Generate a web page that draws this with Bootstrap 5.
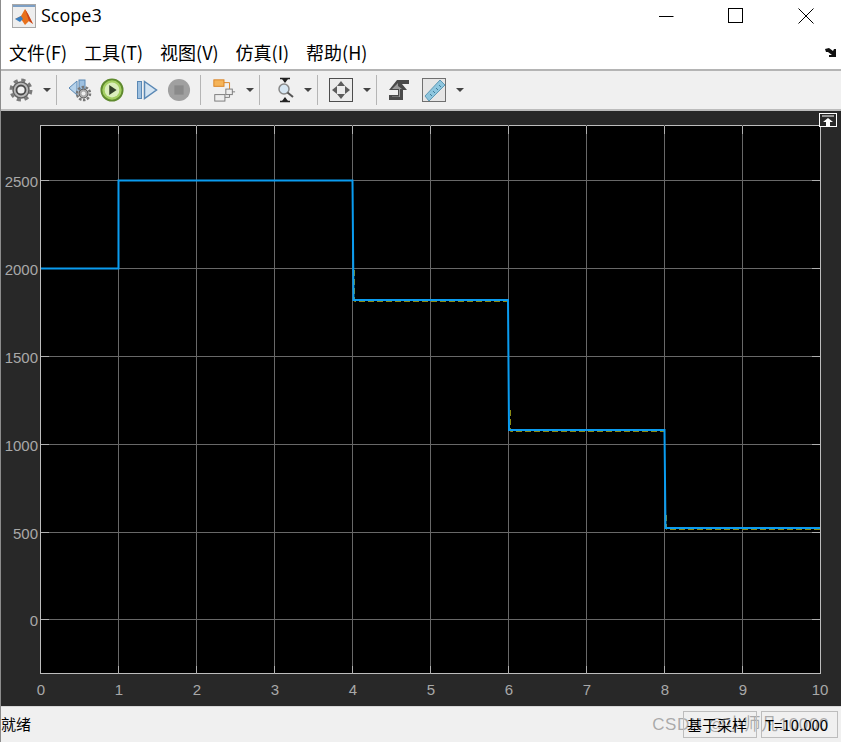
<!DOCTYPE html>
<html lang="zh">
<head>
    <meta charset="UTF-8">
    <meta name="viewport" content="width=device-width, initial-scale=1.0">
    <title>Scope3</title>
    <link href="https://cdn.jsdelivr.net/npm/bootstrap@5.3.0/dist/css/bootstrap.min.css" rel="stylesheet">
    <style>
        html, body { height: 100%; }
        body { background: #fff; overflow: hidden; font-family: "Noto Sans CJK SC", "Noto Sans", sans-serif; color: #000; }
        .scope-win { height: 742px; border-left: 1px solid #8c8c8c; }
        .scope-title { height: 36px; padding: 0 0 5px 11px; }
        .scope-title-text { font-family: "Open Sans", sans-serif; font-size: 18px; margin-left: 5px; }
        .win-btn { width: 46px; height: 32px; }
        .win-btns { margin-right: 12px; }
        .win-btn-gap { margin-left: 24px; }
        .scope-menu { height: 35px; padding-left: 8px; border-bottom: 2px solid #b4b4b4; font-size: 18px; gap: 17px; }
        .scope-tools { height: 40px; background: #f0f0f0; border-bottom: 2px solid #bcbcbc; padding-left: 8px; }
        .tool-sep { width: 1px; height: 30px; background: #b5b5b5; margin: 0 11px 0 5px; }
        .tool-caret { width: 0; height: 0; border-left: 4px solid transparent; border-right: 4px solid transparent; border-top: 4px solid #444; margin-left: 10px; }
        .tool-stop { margin: 0 4px 0 8px; }
        .tool-step { margin-left: 11px; }
        .tool-zoom { margin: 0 -3px 0 2px; }
        .tool-ruler { margin-left: 12px; }
        .scope-plot { height: 595px; background: #282828; }
        .scope-plot svg { display: block; }
        .tick-text { font-family: "Liberation Sans", sans-serif; font-size: 15px; fill: #a8a8a8; }
        .scope-status { height: 36px; background: #f0f0f0; border-top: 1px solid #d8d8d8; font-size: 15px; }
        .status-boxes { margin-right: 3px; }
        .status-box { height: 27px; border: 1px solid #bdbdbd; line-height: 25px; padding: 0 3px; }
        .status-one { width: 74px; }
        .status-two { width: 77px; }
        .status-wm { right: 12px; top: 5px; font-family: "Liberation Sans", "Noto Sans CJK SC", sans-serif; font-size: 17px; letter-spacing: .6px; color: rgba(110,110,110,.55); }
    </style>
</head>
<body>

<div class="scope-win d-flex flex-column">
    <div class="scope-title d-flex align-items-center">
        <svg width="24" height="24" viewBox="0 0 24 24">
            <rect x=".5" y=".5" width="23" height="23" fill="#eeeeee" stroke="#a8a8a8"/>
            <rect x="1" y="1" width="22" height="2" fill="#7d9fc4"/>
            <polygon points="3,15 9,12 13,5 16,10 21,20 17,17 13,21 9,15" fill="#e8711c"/>
            <polygon points="3,15 9,12 11,15 8,18" fill="#3a7fc0"/>
            <polygon points="13,5 16,10 21,20 17,17 15,11" fill="#c8421a"/>
        </svg>
        <span class="scope-title-text">Scope3</span>
        <div class="ms-auto d-flex win-btns">
            <div class="win-btn d-flex align-items-center justify-content-center">
                <svg width="16" height="16"><path d="M1 8.5H15.5" stroke="#000"/></svg>
            </div>
            <div class="win-btn win-btn-gap d-flex align-items-center justify-content-center">
                <svg width="16" height="16"><rect x=".5" y=".5" width="14" height="14" fill="none" stroke="#000"/></svg>
            </div>
            <div class="win-btn win-btn-gap d-flex align-items-center justify-content-center">
                <svg width="16" height="16"><path d="M.5 .5L15.5 15.5M15.5 .5L.5 15.5" stroke="#000"/></svg>
            </div>
        </div>
    </div>

    <div class="scope-menu d-flex align-items-center">
        <span>文件(F)</span>
        <span>工具(T)</span>
        <span>视图(V)</span>
        <span>仿真(I)</span>
        <span>帮助(H)</span>
        <svg class="ms-auto me-1" width="13" height="11" viewBox="0 0 13 11"><path d="M1 2L5 1L9 4L10 2H12V10H5V8H8L4 5L2 5Z" fill="#111"/></svg>
    </div>

    <div class="scope-tools d-flex align-items-center">
        <!-- gear -->
        <svg width="24" height="24" viewBox="0 0 24 24">
            <circle cx="12" cy="12" r="10" fill="none" stroke="#7a7a7a" stroke-width="3" stroke-dasharray="4.2 3.65"/>
            <circle cx="12" cy="12" r="8" fill="#b8b8b8" stroke="#606060" stroke-width="1.5"/>
            <circle cx="12" cy="12" r="4.5" fill="#f0f0f0" stroke="#4c4c4c" stroke-width="1.8"/>
        </svg>
        <span class="tool-caret"></span>
        <span class="tool-sep"></span>
        <!-- step back -->
        <svg width="24" height="24" viewBox="0 0 24 24">
            <polygon points="1,10 9,3 9,17" fill="#b6d2ea" stroke="#5a88b4"/>
            <rect x="11" y="2" width="6" height="11" fill="#9dc0e0" stroke="#5a88b4"/>
            <circle cx="15.5" cy="15.5" r="6.5" fill="none" stroke="#777" stroke-width="2.5" stroke-dasharray="2.5 1.5"/>
            <circle cx="15.5" cy="15.5" r="4.5" fill="#aaa" stroke="#555"/>
            <circle cx="15.5" cy="15.5" r="2" fill="#eee"/>
        </svg>
        <!-- run -->
        <svg class="ms-2" width="24" height="24" viewBox="0 0 26 26">
            <circle cx="13" cy="13" r="11.5" fill="#a4cf62" stroke="#5f8a2e" stroke-width="2"/>
            <circle cx="13" cy="13" r="8" fill="#dbeebc"/>
            <polygon points="10,7.5 18,13 10,18.5" fill="#33402a"/>
        </svg>
        <!-- step forward -->
        <svg class="tool-step" width="24" height="24" viewBox="0 0 24 24">
            <rect x="2.5" y="3.5" width="4" height="17" fill="#9dc0e0" stroke="#5a88b4"/>
            <polygon points="9.5,3.5 21.5,12 9.5,20.5" fill="#d4e4f2" stroke="#5a88b4" stroke-width="1.5"/>
        </svg>
        <!-- stop -->
        <svg class="tool-stop" width="24" height="24" viewBox="0 0 26 26">
            <circle cx="13" cy="13" r="12" fill="#a0a0a0"/>
            <rect x="8" y="8" width="10" height="10" fill="#8a8a8a"/>
        </svg>
        <span class="tool-sep"></span>
        <!-- blocks -->
        <svg width="24" height="24" viewBox="0 0 26 26">
            <rect x="2" y="2" width="11" height="7" fill="#f5b45a" stroke="#d9801f"/>
            <path d="M13 5H19V12" fill="none" stroke="#d9801f"/>
            <rect x="15" y="12" width="7" height="6" fill="#eee" stroke="#777"/>
            <rect x="3" y="18" width="11" height="7" fill="#eee" stroke="#777"/>
            <path d="M14 21H19V18M22 15H25" fill="none" stroke="#777"/>
        </svg>
        <span class="tool-caret"></span>
        <span class="tool-sep"></span>
        <!-- zoom -->
        <svg class="tool-zoom" width="24" height="26" viewBox="0 0 24 26">
            <path d="M7 1.5H17M7 24.5H17M12 1.5V5M12 21V24.5" stroke="#222" stroke-width="1.5"/>
            <path d="M9 2L15 2L12 6ZM9 24L15 24L12 20Z" fill="#222"/>
            <circle cx="11" cy="12" r="5" fill="#d6e6f2" stroke="#888" stroke-width="1.5"/>
            <path d="M14.5 15.5L20 20" stroke="#555" stroke-width="2"/>
        </svg>
        <span class="tool-caret"></span>
        <span class="tool-sep"></span>
        <!-- autoscale -->
        <svg width="24" height="24" viewBox="0 0 24 24">
            <rect x=".5" y=".5" width="23" height="23" fill="#ececec" stroke="#4d4d4d"/>
            <path d="M12 3L16 8H8ZM12 21L16 16H8ZM3 12L8 8V16ZM21 12L16 8V16Z" fill="#5c5c5c"/>
        </svg>
        <span class="tool-caret"></span>
        <span class="tool-sep"></span>
        <!-- signal step -->
        <svg width="22" height="24" viewBox="0 0 22 24">
            <path d="M9 2H21V6H14L19 12H15V22H1V17H10V12H1Z" fill="#4a4a4a"/>
            <path d="M4 11L10 5V8L14 11H12V19H4V18.5H11V11Z" fill="#9a9a9a"/>
        </svg>
        <!-- ruler -->
        <svg class="tool-ruler" width="24" height="24" viewBox="0 0 24 24">
            <rect x=".5" y=".5" width="23" height="23" fill="#e6e6e6" stroke="#707070"/>
            <polygon points="3,18 18,2 23,7 7,23" fill="#8ec6de" stroke="#5f99b5"/>
            <path d="M8 16l2 2M11 13l2 2M14 10l2 2M17 7l2 2" stroke="#3f7d9b"/>
        </svg>
        <span class="tool-caret"></span>
    </div>

    <div class="scope-plot flex-shrink-0">
        <!-- x: 78 px per unit, y: 87.8 px per 500 -->
        <svg width="840" height="595" viewBox="1 111 840 595">
            <rect x="40.5" y="125.5" width="780" height="548" fill="#000" stroke="#bdbdbd"/>
            <g stroke="#686868">
                <path d="M118.5 125V674M196.5 125V674M274.5 125V674M352.5 125V674M430.5 125V674M508.5 125V674M586.5 125V674M664.5 125V674M742.5 125V674"/>
                <path d="M41 180.5H820M41 268.5H820M41 356.5H820M41 444.5H820M41 532.5H820M41 619.5H820"/>
            </g>
            <!-- short ticks, brighter than the grid -->
            <g stroke="#b0b0b0">
                <path d="M41 180.5h8M41 268.5h8M41 356.5h8M41 444.5h8M41 532.5h8M41 619.5h8M812 180.5h8M812 268.5h8M812 356.5h8M812 444.5h8M812 532.5h8M812 619.5h8"/>
                <path d="M118.5 666v8M196.5 666v8M274.5 666v8M352.5 666v8M430.5 666v8M508.5 666v8M586.5 666v8M664.5 666v8M742.5 666v8M118.5 126v8M196.5 126v8M274.5 126v8M352.5 126v8M430.5 126v8M508.5 126v8M586.5 126v8M664.5 126v8M742.5 126v8"/>
            </g>
            <polyline points="354.5,270 354.5,301.5 508,301.5" fill="none" stroke="#8a8a12" stroke-dasharray="6 3"/>
            <polyline points="510.5,410 510.5,431.5 664,431.5" fill="none" stroke="#8a8a12" stroke-dasharray="6 3"/>
            <polyline points="666.5,515 666.5,529.5 820,529.5" fill="none" stroke="#8a8a12" stroke-dasharray="6 3"/>
            <polyline points="41,268.5 118.5,268.5 118.5,180.5 352.5,180.5 353.5,300 508,300 509,430 664.5,430 665.5,528 820,528" fill="none" stroke="#0a9cf0" stroke-width="2"/>
            <g class="tick-text" text-anchor="middle">
                <text x="41" y="695">0</text><text x="119" y="695">1</text><text x="197" y="695">2</text>
                <text x="275" y="695">3</text><text x="353" y="695">4</text><text x="431" y="695">5</text>
                <text x="509" y="695">6</text><text x="587" y="695">7</text><text x="665" y="695">8</text>
                <text x="743" y="695">9</text><text x="820" y="695">10</text>
            </g>
            <g class="tick-text" text-anchor="end">
                <text x="38" y="187">2500</text><text x="38" y="275">2000</text><text x="38" y="363">1500</text>
                <text x="38" y="451">1000</text><text x="38" y="539">500</text><text x="38" y="626">0</text>
            </g>
            <rect x="819.5" y="113.5" width="17" height="13" fill="#282828" stroke="#fff"/>
            <path d="M822 116H834" stroke="#fff"/>
            <path d="M828 118L833 122H830V126H826V122H823Z" fill="#fff"/>
        </svg>
    </div>

    <div class="scope-status d-flex align-items-center position-relative">
        <span>就绪</span>
        <span class="status-wm position-absolute">CSDN @小师凡10000</span>
        <div class="ms-auto d-flex gap-1 status-boxes position-relative">
            <span class="status-box status-one">基于采样</span>
            <span class="status-box status-two">T=10.000</span>
        </div>
    </div>
</div>

<script src="https://cdn.jsdelivr.net/npm/bootstrap@5.3.0/dist/js/bootstrap.bundle.min.js"></script>
</body>
</html>
